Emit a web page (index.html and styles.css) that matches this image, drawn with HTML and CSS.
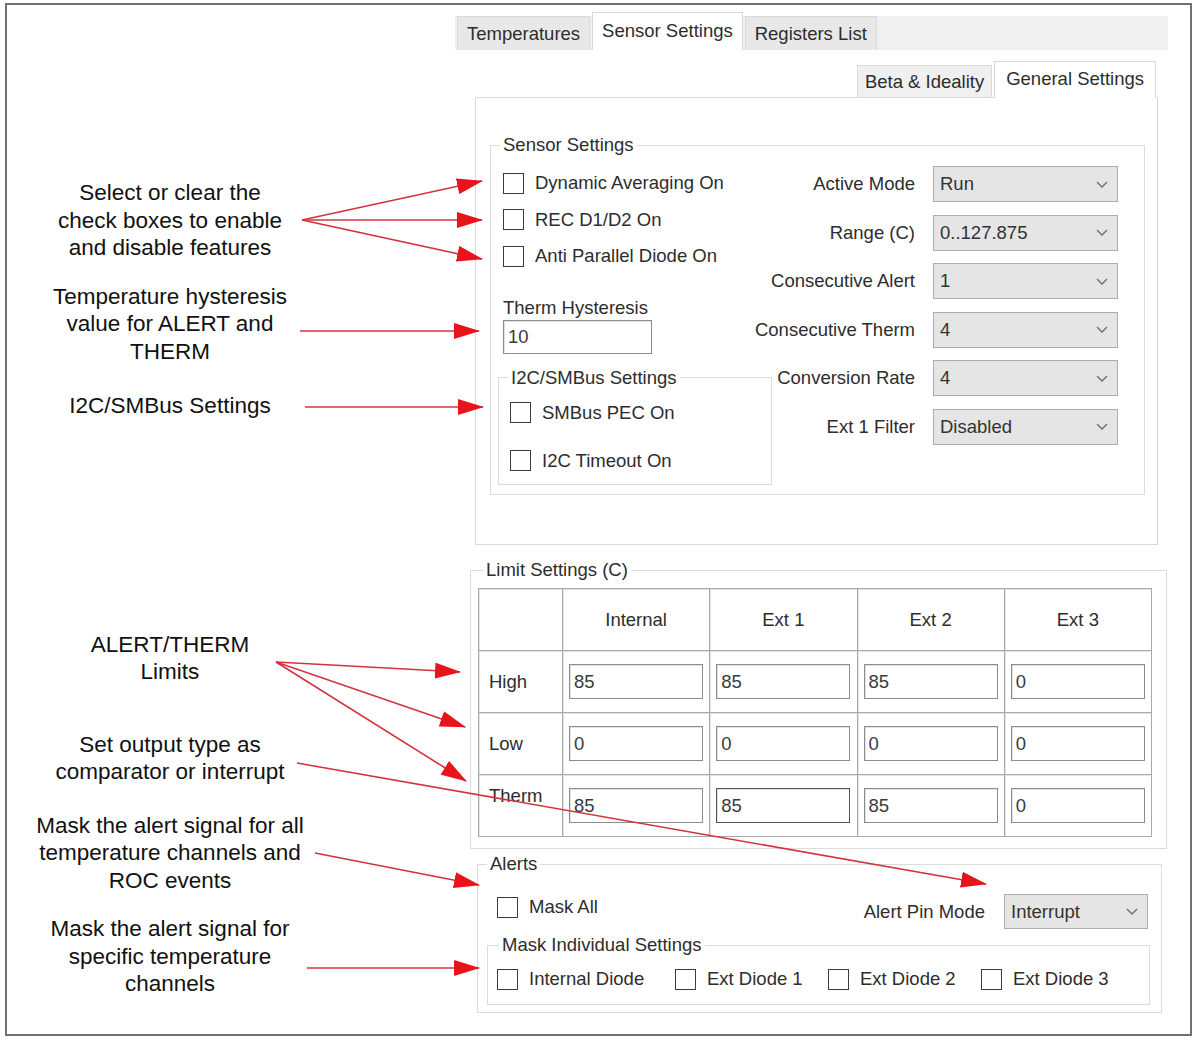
FILE: index.html
```html
<!DOCTYPE html>
<html lang="en">
<head>
    <meta charset="UTF-8">
    <meta name="viewport" content="width=device-width, initial-scale=1.0">
    <title>Sensor Settings - General Settings</title>
    <link rel="stylesheet" href="styles.css">
</head>
<body>
    <div class="frame">
        <!-- Callout texts on the left -->
        <div class="notes">
            <p class="note note-checks">Select or clear the<br>check boxes to enable<br>and disable features</p>
            <p class="note note-hyst">Temperature hysteresis<br>value for ALERT and<br>THERM</p>
            <p class="note note-bus">I2C/SMBus Settings</p>
            <p class="note note-limits">ALERT/THERM<br>Limits</p>
            <p class="note note-output">Set output type as<br>comparator or interrupt</p>
            <p class="note note-maskall">Mask the alert signal for all<br>temperature channels and<br>ROC events</p>
            <p class="note note-mask">Mask the alert signal for<br>specific temperature<br>channels</p>
        </div>

        <!-- The application window -->
        <div class="app">
            <div class="tabs">
                <span class="tab">Temperatures</span>
                <span class="tab tab-active">Sensor Settings</span>
                <span class="tab">Registers List</span>
            </div>

            <div class="subtabs">
                <span class="subtab">Beta &amp; Ideality</span>
                <span class="subtab subtab-active">General Settings</span>
            </div>

            <div class="panel">
                <fieldset class="group group-sensor">
                    <legend>Sensor Settings</legend>
                    <div class="sensor-body">
                        <div class="sensor-left">
                            <div class="checks">
                                <label class="check"><span class="box"></span>Dynamic Averaging On</label>
                                <label class="check"><span class="box"></span>REC D1/D2 On</label>
                                <label class="check"><span class="box"></span>Anti Parallel Diode On</label>
                            </div>
                            <div class="field-label">Therm Hysteresis</div>
                            <input class="textbox textbox-hyst" type="text" value="10" readonly>

                            <fieldset class="group group-bus">
                                <legend>I2C/SMBus Settings</legend>
                                <label class="check check-bus"><span class="box"></span>SMBus PEC On</label>
                                <label class="check check-bus"><span class="box"></span>I2C Timeout On</label>
                            </fieldset>
                        </div>

                        <div class="sensor-right">
                            <span class="combo-label">Active Mode</span>
                            <div class="combo"><span>Run</span><svg class="chev" viewBox="0 0 12 7" width="12" height="7"><path d="M1 1 L6 6 L11 1" /></svg></div>
                            <span class="combo-label">Range (C)</span>
                            <div class="combo"><span>0..127.875</span><svg class="chev" viewBox="0 0 12 7" width="12" height="7"><path d="M1 1 L6 6 L11 1" /></svg></div>
                            <span class="combo-label">Consecutive Alert</span>
                            <div class="combo"><span>1</span><svg class="chev" viewBox="0 0 12 7" width="12" height="7"><path d="M1 1 L6 6 L11 1" /></svg></div>
                            <span class="combo-label">Consecutive Therm</span>
                            <div class="combo"><span>4</span><svg class="chev" viewBox="0 0 12 7" width="12" height="7"><path d="M1 1 L6 6 L11 1" /></svg></div>
                            <span class="combo-label">Conversion Rate</span>
                            <div class="combo"><span>4</span><svg class="chev" viewBox="0 0 12 7" width="12" height="7"><path d="M1 1 L6 6 L11 1" /></svg></div>
                            <span class="combo-label">Ext 1 Filter</span>
                            <div class="combo"><span>Disabled</span><svg class="chev" viewBox="0 0 12 7" width="12" height="7"><path d="M1 1 L6 6 L11 1" /></svg></div>
                        </div>
                    </div>
                </fieldset>
            </div>

            <fieldset class="group group-limits">
                <legend>Limit Settings (C)</legend>
                <table class="limits">
                    <tr>
                        <td class="corner"></td>
                        <td class="head">Internal</td>
                        <td class="head">Ext 1</td>
                        <td class="head">Ext 2</td>
                        <td class="head">Ext 3</td>
                    </tr>
                    <tr>
                        <td class="row-label">High</td>
                        <td><input class="textbox cell-input" type="text" value="85" readonly></td>
                        <td><input class="textbox cell-input" type="text" value="85" readonly></td>
                        <td><input class="textbox cell-input" type="text" value="85" readonly></td>
                        <td><input class="textbox cell-input" type="text" value="0" readonly></td>
                    </tr>
                    <tr>
                        <td class="row-label">Low</td>
                        <td><input class="textbox cell-input" type="text" value="0" readonly></td>
                        <td><input class="textbox cell-input" type="text" value="0" readonly></td>
                        <td><input class="textbox cell-input" type="text" value="0" readonly></td>
                        <td><input class="textbox cell-input" type="text" value="0" readonly></td>
                    </tr>
                    <tr>
                        <td class="row-label row-label-top">Therm</td>
                        <td><input class="textbox cell-input" type="text" value="85" readonly></td>
                        <td><input class="textbox cell-input cell-input-focus" type="text" value="85" readonly></td>
                        <td><input class="textbox cell-input" type="text" value="85" readonly></td>
                        <td><input class="textbox cell-input" type="text" value="0" readonly></td>
                    </tr>
                </table>
            </fieldset>

            <fieldset class="group group-alerts">
                <legend>Alerts</legend>
                <div class="alerts-top">
                    <label class="check"><span class="box"></span>Mask All</label>
                    <div class="pin-mode">
                        <span class="combo-label">Alert Pin Mode</span>
                        <div class="combo combo-pin"><span>Interrupt</span><svg class="chev" viewBox="0 0 12 7" width="12" height="7"><path d="M1 1 L6 6 L11 1" /></svg></div>
                    </div>
                </div>
                <fieldset class="group group-mask">
                    <legend>Mask Individual Settings</legend>
                    <div class="mask-row">
                        <label class="check"><span class="box"></span>Internal Diode</label>
                        <label class="check"><span class="box"></span>Ext Diode 1</label>
                        <label class="check"><span class="box"></span>Ext Diode 2</label>
                        <label class="check"><span class="box"></span>Ext Diode 3</label>
                    </div>
                </fieldset>
            </fieldset>
        </div>
    </div>

    <!-- Red callout arrows drawn over the whole figure -->
    <svg class="arrows" viewBox="0 0 1198 1040" width="1198" height="1040">
        <defs>
            <marker id="head" markerUnits="userSpaceOnUse" markerWidth="26" markerHeight="16" viewBox="0 0 26 16" refX="25" refY="8" orient="auto">
                <path d="M0 0 L26 8 L0 16 Z" fill="#e8141c" />
            </marker>
        </defs>
        <g stroke="#d2343e" stroke-width="1.6" marker-end="url(#head)">
            <line x1="302" y1="220" x2="482" y2="181" />
            <line x1="302" y1="220" x2="482" y2="220" />
            <line x1="302" y1="220" x2="482" y2="259" />
            <line x1="300" y1="331" x2="479" y2="331" />
            <line x1="305" y1="407" x2="483" y2="407" />
            <line x1="276" y1="662" x2="460" y2="672" />
            <line x1="276" y1="662" x2="465" y2="727" />
            <line x1="276" y1="662" x2="466" y2="781" />
            <line x1="297" y1="763" x2="986" y2="884" />
            <line x1="315" y1="853" x2="479" y2="885" />
            <line x1="307" y1="968" x2="479" y2="968" />
        </g>
    </svg>
</body>
</html>
```

FILE: styles.css
```css
body {
    margin: 0;
    width: 1198px;
    height: 1040px;
    background: #fff;
    font-family: "Liberation Sans", Arial, sans-serif;
    color: #2d2d2d;
}
.frame {
    box-sizing: border-box;
    width: 1187px;
    height: 1033px;
    margin: 3px 0 0 5px;
    border: 2px solid #707070;
    display: flex;
}

/* left column of callouts */
.notes {
    width: 326px;
    flex: none;
    text-align: center;
    font-size: 22.5px;
    line-height: 27.5px;
    color: #111;
}
.note {
    margin: 0;
}
.note-checks { margin-top: 174px; }
.note-hyst { margin-top: 21px; }
.note-bus { margin-top: 27px; }
.note-limits { margin-top: 211px; }
.note-output { margin-top: 45px; }
.note-maskall { margin-top: 26px; }
.note-mask { margin-top: 21px; }

/* application window */
.app {
    width: 713px;
    margin-left: 122px;
    font-size: 18.5px;
    line-height: 22px;
}
.tabs {
    display: flex;
    align-items: flex-end;
    height: 34px;
    margin-top: 11px;
    padding-left: 2px;
    gap: 2px;
    background: #f0f0f0;
}
.tab {
    box-sizing: border-box;
    height: 34px;
    padding: 6px 9px 0;
    background: #e8e8e8;
    border: 1px solid #dadada;
    border-bottom: none;
}
.tab-active {
    height: 38px;
    padding-top: 7px;
    background: #fff;
}
.subtabs {
    display: flex;
    justify-content: flex-end;
    align-items: flex-end;
    height: 35px;
    margin-top: 12px;
    padding-right: 12px;
    gap: 2px;
}
.subtab {
    box-sizing: border-box;
    height: 32px;
    padding: 5px 7px 0;
    background: #f0f0f0;
    border: 1px solid #dadada;
    border-bottom: none;
}
.subtab-active {
    position: relative;
    z-index: 1;
    height: 37px;
    margin-bottom: -1px;
    padding: 6px 11px 0;
    background: #fff;
}
.panel {
    box-sizing: border-box;
    width: 683px;
    height: 448px;
    margin-left: 20px;
    border: 1px solid #d9d9d9;
    padding-top: 36px;
}

/* group boxes */
.group {
    margin: 0;
    padding: 0;
    min-width: 0;
    border: 1px solid #dcdcdc;
}
.group legend {
    padding: 0 3px;
    margin-left: 9px;
    line-height: 22px;
}
.group-sensor {
    margin: 0 12px 0 14px;
}
.sensor-body {
    display: flex;
    padding: 0 26px 9px 7px;
}
.sensor-left {
    width: 254px;
    flex: none;
    padding-top: 9px;
}
.checks {
    margin-left: 5px;
}
.check {
    display: flex;
    align-items: center;
    height: 36.5px;
    white-space: nowrap;
}
.box {
    box-sizing: border-box;
    width: 21px;
    height: 21px;
    margin-right: 11px;
    border: 1.5px solid #3c3c3c;
    background: #fff;
    flex: none;
}
.field-label {
    margin-top: 22px;
    margin-left: 5px;
}
.textbox {
    box-sizing: border-box;
    font-family: "Liberation Sans", Arial, sans-serif;
    font-size: 18.5px;
    color: #3a3a3a;
    background: #fff;
    border: 1px solid #8c8c8c;
    box-shadow: inset 1px 1px 0 #e2e2e2;
    padding: 0 4px;
    margin: 0;
    outline: none;
}
.textbox-hyst {
    display: block;
    width: 149px;
    height: 34px;
    margin: 1px 0 0 5px;
}
.group-bus {
    box-sizing: border-box;
    width: 274px;
    margin-top: 13px;
    padding: 6px 0 5px 11px;
}
.group-bus legend {
    margin-left: -2px;
}
.check-bus {
    height: 36px;
}
.check-bus + .check-bus {
    margin-top: 12px;
}
.sensor-right {
    flex: 1;
    display: grid;
    grid-template-columns: 1fr 185px;
    column-gap: 18px;
    row-gap: 12.6px;
    align-items: center;
    align-content: start;
    padding-top: 10px;
}
.combo-label {
    justify-self: end;
    white-space: nowrap;
}
.combo {
    box-sizing: border-box;
    height: 36px;
    display: flex;
    align-items: center;
    justify-content: space-between;
    padding: 0 9px 0 6px;
    background: #e5e5e5;
    border: 1px solid #adadad;
    color: #333;
}
.chev path {
    fill: none;
    stroke: #6b6b6b;
    stroke-width: 1.3;
}

/* limit table */
.group-limits {
    width: 688px;
    margin: 14px 0 0 15px;
    padding: 7px 0 11px 7px;
}
.group-limits legend {
    margin-left: 5px;
}
.limits {
    border-collapse: collapse;
    width: 674px;
}
.limits tr {
    height: 62px;
}
.limits td {
    padding: 0 0 0 6px;
    border: 1px solid #a9a9a9;
    box-shadow: inset 1px 1px 0 #e4e4e4;
    vertical-align: middle;
}
.limits .corner {
    width: 77px;
}
.limits .head {
    text-align: center;
    padding: 0;
}
.limits .row-label {
    padding-left: 10px;
}
.limits .row-label-top {
    vertical-align: top;
    padding-top: 10px;
}
.cell-input {
    display: block;
    width: 134px;
    height: 35px;
}
.cell-input-focus {
    border-color: #555;
}

/* alerts */
.group-alerts {
    width: 683px;
    margin: 4px 0 0 22px;
    padding: 0 0 7px 0;
}
.alerts-top {
    display: flex;
    justify-content: space-between;
    align-items: flex-start;
    padding: 19px 13px 0 19px;
}
.alerts-top .check {
    height: 26px;
}
.pin-mode {
    display: flex;
    align-items: center;
    gap: 19px;
}
.combo-pin {
    width: 144px;
    height: 35px;
}
.group-mask {
    margin: 5px 11px 0 9px;
    padding: 12px 0 14px 9px;
}
.group-mask legend {
    margin-left: 2px;
}
.mask-row {
    display: grid;
    grid-template-columns: 178px 153px 153px auto;
}
.mask-row .check {
    height: 22px;
}

/* overlay arrows */
.arrows {
    position: absolute;
    left: 0;
    top: 0;
    pointer-events: none;
}
```
